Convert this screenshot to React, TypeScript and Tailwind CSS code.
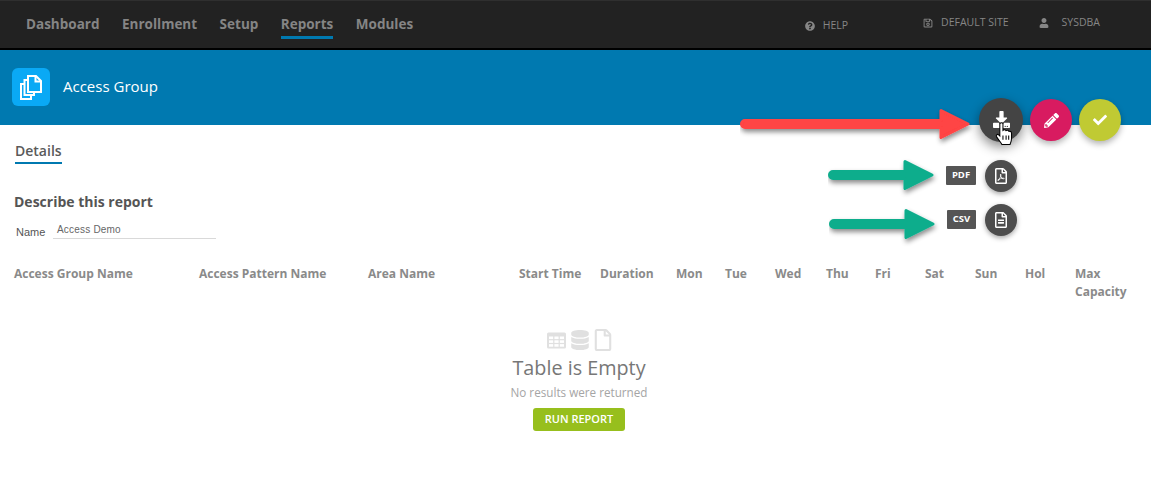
import { FaCheck, FaDatabase, FaDownload, FaPencilAlt, FaQuestionCircle, FaRegFile, FaRegFileAlt, FaRegFilePdf, FaRegSave, FaUser } from 'react-icons/fa'

const NAV = ['Dashboard', 'Enrollment', 'Setup', 'Reports', 'Modules']

const COLUMNS = ['Access Group Name', 'Access Pattern Name', 'Area Name', 'Start Time', 'Duration', 'Mon', 'Tue', 'Wed', 'Thu', 'Fri', 'Sat', 'Sun', 'Hol', 'Max Capacity']

function Arrow({ width, color, className }: { width: number; color: string; className: string }) {
  const head = 27
  return (
    <svg width={width + 8} height={44} viewBox={`0 0 ${width + 8} 44`} className={className}>
      <defs>
        <filter id={`shadow-${width}-${color.slice(1)}`} x="-10%" y="-30%" width="120%" height="170%">
          <feDropShadow dx="1" dy="3" stdDeviation="2.5" floodColor="#000" floodOpacity="0.45" />
        </filter>
      </defs>
      <g filter={`url(#shadow-${width}-${color.slice(1)})`}>
        <path
          d={`M5 14.5 H${width - head} V4.5 L${width} 18 L${width - head} 31.5 V21.5 H5 A3.5 3.5 0 0 1 5 14.5 Z`}
          fill={color}
          strokeLinejoin="round"
          stroke={color}
          strokeWidth="3"
        />
      </g>
    </svg>
  )
}

function HandCursor({ className }: { className: string }) {
  return (
    <svg width="18" height="24" viewBox="0 0 17 23" className={className}>
      <path
        d="M4.5 1.5 C5.5 .5 7 .5 7.5 1.5 V8 C8.5 7 10 7.3 10.5 8.3 C11.5 7.6 12.8 8 13.2 9 C14.3 8.6 15.7 9.2 15.7 10.5 V16 C15.7 18 15 19.5 14.3 21.5 H6.5 C5.5 19.5 3.5 17.5 1.3 14 C.6 12.7 2 11.3 3.2 12.2 L4.5 13.5 Z"
        fill="#fff"
        stroke="#000"
        strokeWidth="1"
      />
      <path d="M7.5 13 V17 M10.5 13 V17 M13 13 V17" stroke="#000" strokeWidth="1" />
    </svg>
  )
}

function PagesIcon() {
  return (
    <svg width="24" height="26" viewBox="0 0 24 26" fill="none" stroke="#fff" strokeWidth="2">
      <path d="M9 2 H17 L22 7 V18 H9 Z" fill="#0aa9f5" />
      <path d="M16.5 2 V7.5 H22" />
      <path d="M9 6 H5.5 V21 H15 V18" />
      <path d="M5.5 10 H2 V25 H12 V21" />
    </svg>
  )
}

function TableIcon() {
  return (
    <svg width="19" height="17" viewBox="0 0 19 16" fill="#e0e0e0">
      <path d="M1.5 0 H17.5 A1.5 1.5 0 0 1 19 1.5 V14.5 A1.5 1.5 0 0 1 17.5 16 H1.5 A1.5 1.5 0 0 1 0 14.5 V1.5 A1.5 1.5 0 0 1 1.5 0 Z" />
      <g fill="#fff">
        <rect x="2" y="4" width="4.2" height="2.6" />
        <rect x="7.4" y="4" width="4.2" height="2.6" />
        <rect x="12.8" y="4" width="4.2" height="2.6" />
        <rect x="2" y="7.8" width="4.2" height="2.6" />
        <rect x="7.4" y="7.8" width="4.2" height="2.6" />
        <rect x="12.8" y="7.8" width="4.2" height="2.6" />
        <rect x="2" y="11.6" width="4.2" height="2.6" />
        <rect x="7.4" y="11.6" width="4.2" height="2.6" />
        <rect x="12.8" y="11.6" width="4.2" height="2.6" />
      </g>
    </svg>
  )
}

export default function App() {
  return (
    <div className="relative min-h-[486px] bg-white font-['Open_Sans',sans-serif] overflow-hidden">
      {/* Top nav */}
      <div className="h-[50px] bg-[#222222] border-t border-[#2f2f2f] border-b-2 border-b-black flex items-start pl-[26px] pr-[51px]">
        <nav className="flex gap-[22.5px] pt-[14px]">
          {NAV.map((item) => (
            <a
              key={item}
              className={`text-[13.5px] leading-[19px] font-bold text-[#858585] pb-[2px] border-b-[3px] ${item === 'Reports' ? 'border-[#0079b0]' : 'border-transparent'}`}
            >
              {item}
            </a>
          ))}
        </nav>
        <div className="ml-auto flex items-start text-[10.5px] text-[#868686]">
          <span className="flex items-center gap-2 mt-[17px] mr-[75px]">
            <FaQuestionCircle size={10} />
            HELP
          </span>
          <span className="flex items-center gap-2 mt-[14px] mr-[30px]">
            <FaRegSave size={10} />
            DEFAULT SITE
          </span>
          <span className="flex items-center gap-[13px] mt-[14px]">
            <FaUser size={10} />
            SYSDBA
          </span>
        </div>
      </div>

      {/* Title band */}
      <div className="h-[75px] bg-[#0079b0] flex items-center pl-3 gap-[13px]">
        <div className="w-[38px] h-[38px] mt-[-1px] rounded-md bg-[#0aa9f5] flex items-center justify-center">
          <PagesIcon />
        </div>
        <span className="text-[15px] text-white mt-[-2px]">Access Group</span>
      </div>

      {/* Details */}
      <div className="pt-[16px] pl-[14px] pr-[14px]">
        <div className="flex pl-px">
          <span className="text-[14px] leading-[20px] font-semibold text-[#5a5a5a] border-b-2 border-[#0079b0] pb-px">Details</span>
        </div>
        <h2 className="mt-[28px] text-[14px] leading-[20px] font-bold text-[#555]">Describe this report</h2>
        <div className="mt-[9px] flex items-start pl-[2px] font-['Liberation_Sans',sans-serif]">
          <span className="w-[37px] pt-[5px] text-[11px] leading-[13px] text-[#555]">Name</span>
          <div className="w-[163px] h-[18px] pl-1 pt-px border-b border-[#d9d9d9] text-[10px] leading-[15px] tracking-[0.2px] text-[#666]">Access Demo</div>
        </div>

        <div className="mt-[26px] grid grid-cols-[185px_169px_151px_81px_76px_49px_50px_51px_49px_50px_50px_50px_50px_1fr] text-[12px] leading-[17.5px] font-bold text-[#8a8a8a]">
          {COLUMNS.map((col) => (
            <div key={col}>{col}</div>
          ))}
        </div>
      </div>

      {/* Empty state */}
      <div className="mt-[29px] pl-[7px] flex flex-col items-center">
        <div className="h-[22px] pl-[2.5px] flex items-center text-[#e0e0e0]">
          <TableIcon />
          <FaDatabase size={20} className="ml-1" />
          <FaRegFile size={22} className="ml-[1.5px]" />
        </div>
        <div className="mt-[3px] text-[19.8px] leading-[28px] text-[#777]">Table is Empty</div>
        <div className="mt-px text-[11.7px] leading-[18px] text-[#a5a5a5]">No results were returned</div>
        <button className="mt-[7px] w-[92px] h-[23px] rounded-[3px] bg-[#97bf1d] text-white text-[11px] font-semibold">RUN REPORT</button>
      </div>

      {/* Floating actions and annotation arrows */}
      <div className="absolute left-[979px] top-[98px] w-[44px] h-[44px] rounded-full bg-[#444444] shadow-[0_5px_12px_rgba(0,0,0,0.45)] flex items-center justify-center text-white">
        <FaDownload size={17} className="mt-[-2px]" />
      </div>
      <div className="absolute left-[1030px] top-[99px] w-[42px] h-[42px] rounded-full bg-[#d81b60] shadow-[0_3px_6px_rgba(0,0,0,0.3)] flex items-center justify-center text-white">
        <FaPencilAlt size={15} />
      </div>
      <div className="absolute left-[1079px] top-[99px] w-[42px] h-[42px] rounded-full bg-[#c0ca33] shadow-[0_3px_6px_rgba(0,0,0,0.3)] flex items-center justify-center text-white">
        <FaCheck size={14} />
      </div>
      <HandCursor className="absolute left-[995px] top-[122px]" />

      <div className="absolute left-[985px] top-[160px] w-[32px] h-[32px] rounded-full bg-[#4d4d4d] shadow-[0_2px_5px_rgba(0,0,0,0.35)] flex items-center justify-center text-white">
        <FaRegFilePdf size={16} />
      </div>
      <div className="absolute left-[985px] top-[204px] w-[32px] h-[32px] rounded-full bg-[#4d4d4d] shadow-[0_2px_5px_rgba(0,0,0,0.35)] flex items-center justify-center text-white">
        <FaRegFileAlt size={16} />
      </div>
      <div className="absolute left-[946px] top-[166px] w-[30px] h-[19px] rounded-[1px] bg-[#555555] flex items-center justify-center text-white text-[9.5px] font-bold">PDF</div>
      <div className="absolute left-[947px] top-[210px] w-[29px] h-[19px] rounded-[1px] bg-[#555555] flex items-center justify-center text-white text-[9.5px] font-bold">CSV</div>

      <Arrow width={228} color="#ff4444" className="absolute left-[740px] top-[106px]" />
      <Arrow width={104} color="#0aad8c" className="absolute left-[828px] top-[157px]" />
      <Arrow width={104} color="#0aad8c" className="absolute left-[829px] top-[206px]" />
    </div>
  )
}
